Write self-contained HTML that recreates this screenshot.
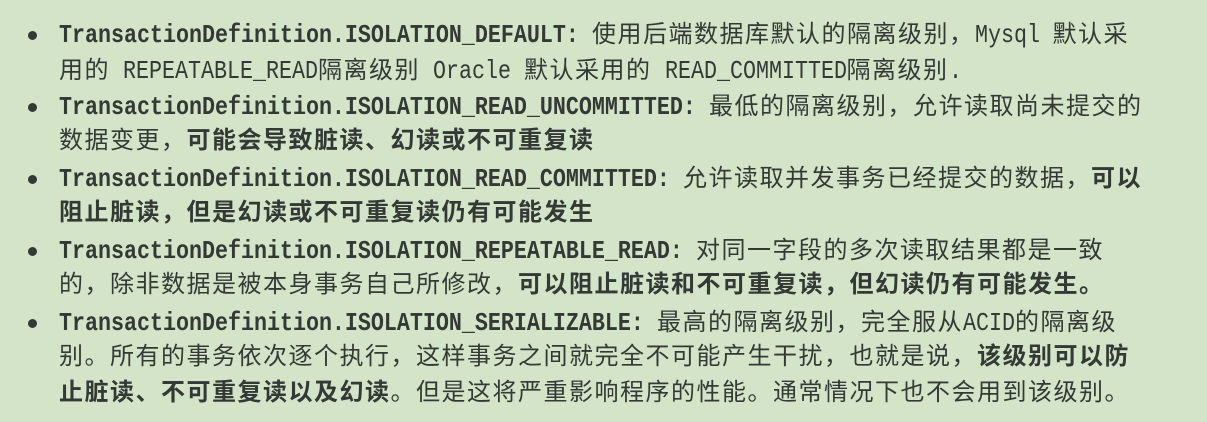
<!DOCTYPE html>
<html><head><meta charset="utf-8"><style>
html,body{margin:0;padding:0;}
body{width:1207px;height:422px;background:#d3e4c9;overflow:hidden;color:#333a35;
font-family:"Liberation Mono","Noto Sans CJK SC",monospace;font-size:24px;letter-spacing:1.5px;}
.wrap{padding-top:17px;}
.l{height:36px;line-height:36px;white-space:nowrap;padding-left:59px;position:relative;}
.b::before{content:"";position:absolute;left:28px;top:14px;width:9px;height:9px;border-radius:50%;background:#333a35;}
.m{display:inline-block;white-space:pre;letter-spacing:0;vertical-align:baseline;}
.m>span{display:inline-block;font-size:26px;transform:scaleX(0.833);transform-origin:0 50%;}
b{font-weight:bold;}
</style></head><body><div class="wrap">
<div class="l b"><span class="m" style="width:533px"><span><b>TransactionDefinition.ISOLATION_DEFAULT:</b> </span></span>使用后端数据库默认的隔离级别，<span class="m" style="width:78px"><span>Mysql </span></span>默认采</div>
<div class="l">用的<span class="m" style="width:208px"><span> REPEATABLE_READ</span></span>隔离级别<span class="m" style="width:104px"><span> Oracle </span></span>默认采用的<span class="m" style="width:195px"><span> READ_COMMITTED</span></span>隔离级别<span class="m" style="width:13px"><span>.</span></span></div>
<div class="l b"><span class="m" style="width:650px"><span><b>TransactionDefinition.ISOLATION_READ_UNCOMMITTED:</b> </span></span>最低的隔离级别，允许读取尚未提交的</div>
<div class="l">数据变更，<b>可能会导致脏读、幻读或不可重复读</b></div>
<div class="l b"><span class="m" style="width:624px"><span><b>TransactionDefinition.ISOLATION_READ_COMMITTED:</b> </span></span>允许读取并发事务已经提交的数据，<b>可以</b></div>
<div class="l"><b>阻止脏读，但是幻读或不可重复读仍有可能发生</b></div>
<div class="l b"><span class="m" style="width:637px"><span><b>TransactionDefinition.ISOLATION_REPEATABLE_READ:</b> </span></span>对同一字段的多次读取结果都是一致</div>
<div class="l">的，除非数据是被本身事务自己所修改，<b>可以阻止脏读和不可重复读，但幻读仍有可能发生。</b></div>
<div class="l b"><span class="m" style="width:598px"><span><b>TransactionDefinition.ISOLATION_SERIALIZABLE:</b> </span></span>最高的隔离级别，完全服从<span class="m" style="width:52px"><span>ACID</span></span>的隔离级</div>
<div class="l">别。所有的事务依次逐个执行，这样事务之间就完全不可能产生干扰，也就是说，<b>该级别可以防</b></div>
<div class="l"><b>止脏读、不可重复读以及幻读</b>。但是这将严重影响程序的性能。通常情况下也不会用到该级别。</div>
</div></body></html>
